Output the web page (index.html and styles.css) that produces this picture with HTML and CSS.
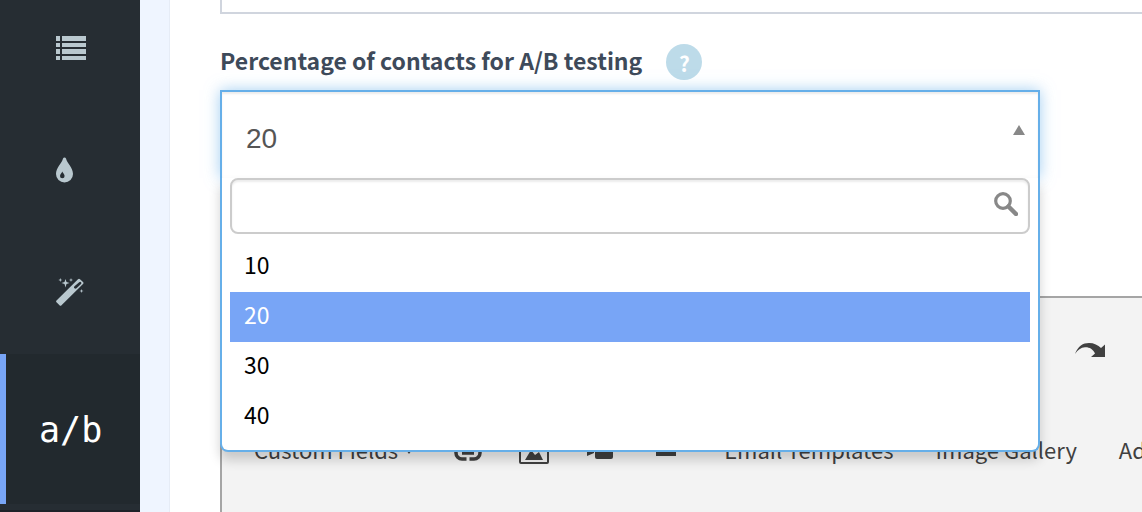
FILE: index.html
```html
<!DOCTYPE html>
<html lang="en">
<head>
  <meta charset="UTF-8" />
  <title>A/B testing</title>
  <link rel="stylesheet" href="styles.css">
</head>
<body>
  <div class="app">
    <nav class="sidebar">
      <a class="side-item" href="#" aria-label="Content">
        <svg width="30" height="24" viewBox="0 0 30 24" fill="currentColor">
          <path d="M0 0h4v5H0zM6 0h24v5H6zM0 7h4v4H0zM6 7h24v4H6zM0 13h4v5H0zM6 13h24v5H6zM0 20h4v4H0zM6 20h24v4H6z"/>
        </svg>
      </a>
      <a class="side-item" href="#" aria-label="Theme">
        <svg width="18" height="26" viewBox="0 0 18 26" fill="currentColor" fill-rule="evenodd">
          <path d="M7 1.500C7.500 0 9.500 0 10 1.500C11 6 17 10.500 17 17a8.500 8.500 0 0 1-17 0C0 10.500 6 6 7 1.500zM6.300 14.500C6 16 4 17 4 19a2.300 2.300 0 0 0 4.600 0c0-2-2-3-2.300-4.500z"/>
        </svg>
      </a>
      <a class="side-item" href="#" aria-label="Builder">
        <svg width="28" height="28" viewBox="0 0 28 28" fill="currentColor" fill-rule="evenodd">
          <path d="M.5 22.500L22 1.200q1-1 2 0L27 4q1 1 0 2L5.500 27.300q-1 1-2 0L.5 24.300q-.8-.8 0-1.800zM18.500 8.300q-1 1.200 0 2t2 0L25 6q.8-1 0-1.800t-1.800 0z"/>
          <path d="M9.500 1l1 3 3 1-3 1-1 3.500-1-3.500-3-1 3-1zM4.300 0l.5 1.500 1.500.5-1.500.5-.5 1.500-.5-1.500L2.300 2l1.500-.5zM15 0l.5 1.500L17 2l-1.500.5L15 4l-.5-1.500L13 2l1.500-.5zM25.500 11l.5 1.500 1.500.5-1.500.5-.5 1.500-.5-1.500-1.500-.5 1.500-.5z"/>
        </svg>
      </a>
      <a class="side-item active" href="#">a/b</a>
      <div class="side-end"></div>
    </nav>

    <main class="content">
      <input class="text-field" type="text" aria-label="Subject" />

      <div class="label-row">
        <label for="percentage">Percentage of contacts for A/B testing</label>
        <button class="help" type="button">?</button>
      </div>

      <div class="dropdown">
        <select class="dropdown-value" id="percentage">
          <option>10</option>
          <option selected>20</option>
          <option>30</option>
          <option>40</option>
        </select>
        <svg class="dropdown-arrow" width="12" height="10" viewBox="0 0 12 10"><path d="M6 0l6 10H0z" fill="#888"/></svg>
        <div class="dropdown-panel">
          <div class="search">
            <input class="search-input" type="text" aria-label="Search" />
            <svg class="search-icon" width="24" height="24" viewBox="0 0 24 24" fill="none" stroke="#888">
              <circle cx="9" cy="9" r="7.300" stroke-width="3.200"/>
              <path d="M14.500 14.500l7.500 7.500" stroke-width="4.500" stroke-linecap="round"/>
            </svg>
          </div>
          <ul class="options" role="listbox" aria-label="Percentage">
            <li role="option">10</li>
            <li role="option" class="highlighted" aria-selected="true">20</li>
            <li role="option">30</li>
            <li role="option">40</li>
          </ul>
        </div>
      </div>

      <div class="editor">
        <div class="toolbar toolbar-history">
          <button class="tool icon-tool" type="button" aria-label="Redo">
            <svg width="30" height="14" viewBox="0 0 30 14" fill="currentColor">
              <path d="M0 11C3 3 8 0 14 0c5 0 9 2 12 5l4-3.500V14H16l4-3.500C18 6 14 4 10 4.300 6 4.500 2.500 7 0 11z"/>
            </svg>
          </button>
        </div>
        <div class="toolbar toolbar-insert">
          <button class="tool" type="button">Custom Fields
            <svg class="caret" width="10" height="10" viewBox="0 0 10 10" fill="currentColor"><path d="M0 3h10L5 10z"/></svg>
          </button>
          <div class="tool-group">
            <button class="tool icon-tool" type="button" aria-label="Link">
              <svg width="28" height="20" viewBox="0 0 28 20" fill="none" stroke="currentColor" stroke-width="3.500">
                <path d="M12.500 18H8a6 6 0 0 1-6-6V8a6 6 0 0 1 6-6h4.500M15.500 2H20a6 6 0 0 1 6 6v4a6 6 0 0 1-6 6h-4.500M8 12h12"/>
              </svg>
            </button>
            <button class="tool icon-tool" type="button" aria-label="Image">
              <svg width="30" height="26" viewBox="0 0 30 26">
                <rect x="1" y="1" width="28" height="24" rx="1" fill="none" stroke="currentColor" stroke-width="2"/>
                <path d="M6 22l6-10 4 5 4-3 4 8z" fill="currentColor"/>
              </svg>
            </button>
            <button class="tool icon-tool" type="button" aria-label="Video">
              <svg width="26" height="16" viewBox="0 0 26 16" fill="currentColor">
                <path d="M0 5l7 4v1l-7 3z"/><rect x="8" width="18" height="16" rx="2"/>
              </svg>
            </button>
            <button class="tool icon-tool" type="button" aria-label="Horizontal line">
              <svg width="20" height="10" viewBox="0 0 20 10"><path d="M0 5h20v5H0z" fill="currentColor"/></svg>
            </button>
          </div>
          <button class="tool" type="button">Email Templates</button>
          <button class="tool" type="button">Image Gallery</button>
          <button class="tool" type="button">Ad</button>
        </div>
      </div>
    </main>
  </div>
</body>
</html>
```
FILE: styles.css
```css
:root {
  --sidebar: #262d33;
  --sidebar-active: #22292e;
  --accent: #78a5f6;
  --focus: #66afe9;
  --label: #3e4a5a;
  --tool: #404040;
}

*, *::before, *::after {
  box-sizing: border-box;
  margin: 0;
  padding: 0;
}

body {
  font-family: "Noto Sans CJK SC", "Noto Sans", sans-serif;
  font-size: 23px;
  background: #fff;
  overflow: hidden;
}

button, input, select {
  font: inherit;
}

.app {
  display: flex;
  height: 100vh;
  overflow: hidden;
  background: #eff5ff;
}

/* Sidebar */
.sidebar {
  flex: 0 0 140px;
  margin-top: -12px;
  background: var(--sidebar);
}

.side-item {
  display: flex;
  align-items: center;
  height: 122px;
  padding: 0 0 2px 56px;
  color: #b9c8cf;
  text-decoration: none;
}

.side-item.active {
  height: 150px;
  padding: 2px 0 0 33px;
  border-left: 6px solid var(--accent);
  background: var(--sidebar-active);
  color: #fff;
  font-family: "DejaVu Sans Mono", monospace;
  font-size: 35px;
}

.side-end {
  height: 8px;
  border-bottom: 2px solid #1e2229;
}

/* Form */
.content {
  flex: 1;
  min-width: 0;
  margin-left: 29px;
  padding-left: 50px;
  border-left: 1px solid #e6ecf6;
  background: #fff;
}

.text-field {
  display: block;
  width: 100%;
  height: 14px;
  border: 2px solid #d0d5de;
  border-width: 0 0 2px 2px;
  outline: none;
}

.label-row {
  display: flex;
  align-items: center;
  gap: 24px;
  height: 36px;
  margin: 30px 0 10px;
  color: var(--label);
  font-weight: 700;
}

.label-row label {
  padding-bottom: 4px;
}

.help {
  width: 36px;
  height: 36px;
  border: none;
  border-radius: 50%;
  background: #bddbe9;
  color: #fff;
  font-size: 21px;
  font-weight: 700;
  line-height: 38px;
}

.dropdown {
  position: relative;
  z-index: 1;
  width: 820px;
}

.dropdown-value {
  display: block;
  width: 100%;
  height: 88px;
  padding: 6px 24px 0;
  border: 2px solid var(--focus);
  border-bottom: none;
  background: #fff;
  box-shadow: inset 0 2px 2px rgba(0, 0, 0, 0.075), 0 0 14px rgba(102, 175, 233, 0.6);
  color: #555;
  font-family: "Liberation Sans", sans-serif;
  font-size: 28px;
  appearance: none;
  outline: none;
}

.dropdown-arrow {
  position: absolute;
  top: 35px;
  right: 15px;
}

.dropdown-panel {
  position: absolute;
  top: 100%;
  left: 0;
  width: 100%;
  padding: 0 8px 8px;
  border: 2px solid var(--focus);
  border-top: none;
  border-radius: 0 0 8px 8px;
  background: #fff;
  box-shadow: 0 8px 12px rgba(0, 0, 0, 0.18);
}

.search {
  position: relative;
}

.search-input {
  display: block;
  width: 100%;
  height: 56px;
  padding: 0 48px 0 12px;
  border: 2px solid #ccc;
  border-radius: 8px;
  background: #fff;
  box-shadow: inset 0 2px 2px rgba(0, 0, 0, 0.075);
  outline: none;
}

.search-icon {
  position: absolute;
  top: 14px;
  right: 12px;
}

.options {
  margin-top: 8px;
  list-style: none;
  color: #000;
}

.options li {
  height: 50px;
  padding-left: 14px;
  line-height: 44px;
}

.options .highlighted {
  background: var(--accent);
  color: #fff;
}

/* Editor */
.editor {
  height: 400px;
  margin-top: 118px;
  border: 2px solid #a5a5a5;
  border-right: none;
  background: #f3f3f3;
  overflow: hidden;
}

.toolbar {
  display: flex;
  height: 104px;
}

.toolbar-history {
  padding-left: 835px;
}

.toolbar-insert {
  height: 98px;
  padding-left: 11px;
}

.tool-group {
  display: flex;
  margin-right: 4px;
}

.tool {
  display: flex;
  flex: none;
  align-items: center;
  height: 100%;
  padding: 0 21px 4px;
  border: none;
  background: none;
  color: var(--tool);
  font-size: 22px;
  white-space: nowrap;
}

.icon-tool {
  justify-content: center;
  width: 66px;
  padding: 0;
}

.caret {
  margin-left: 6px;
}
```
